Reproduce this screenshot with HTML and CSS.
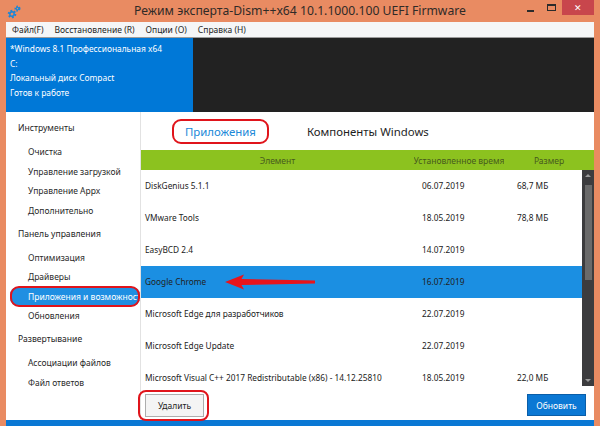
FILE: index.html
```html
<!DOCTYPE html>
<html lang="ru">
<head>
<meta charset="utf-8">
<title>Dism++</title>
<link rel="stylesheet" href="styles.css">
</head>
<body>
<div class="window">
  <header class="titlebar">
    <svg class="app-icon" width="14" height="14" viewBox="0 0 14 14">
      <circle cx="5" cy="9" r="3" fill="none" stroke="#1c86d6" stroke-width="2.6" stroke-dasharray="1.6 1.5"/>
      <circle cx="5" cy="9" r="2.2" fill="none" stroke="#1c86d6" stroke-width="1.4"/>
      <circle cx="10.5" cy="3.6" r="2" fill="none" stroke="#1c86d6" stroke-width="2" stroke-dasharray="1.3 1.2"/>
      <circle cx="10.5" cy="3.6" r="1.4" fill="none" stroke="#1c86d6" stroke-width="1.1"/>
    </svg>
    <div class="title">Режим эксперта-Dism++x64 10.1.1000.100 UEFI Firmware</div>
    <div class="controls">
      <span class="ctl-min"></span>
      <span class="ctl-max"></span>
      <span class="ctl-close">✕</span>
    </div>
  </header>
  <div class="frame">
    <nav class="menubar">
      <span>Файл(F)</span>
      <span>Восстановление (R)</span>
      <span>Опции (O)</span>
      <span>Справка (H)</span>
    </nav>
    <section class="info">
      <div class="info-text">
        <div>*Windows 8.1 Профессиональная x64</div>
        <div>C:</div>
        <div>Локальный диск Compact</div>
        <div>Готов к работе</div>
      </div>
      <div class="info-dark"></div>
    </section>
    <div class="main">
      <aside class="sidebar">
        <div class="nav-section">
          <div class="nav-head">Инструменты</div>
          <div class="nav-item">Очистка</div>
          <div class="nav-item">Управление загрузкой</div>
          <div class="nav-item">Управление Appx</div>
          <div class="nav-item">Дополнительно</div>
        </div>
        <div class="nav-section">
          <div class="nav-head">Панель управления</div>
          <div class="nav-item">Оптимизация</div>
          <div class="nav-item">Драйверы</div>
          <div class="nav-item selected">Приложения и возможности</div>
          <div class="nav-item">Обновления</div>
        </div>
        <div class="nav-section">
          <div class="nav-head">Развертывание</div>
          <div class="nav-item">Ассоциации файлов</div>
          <div class="nav-item">Файл ответов</div>
        </div>
      </aside>
      <main class="content">
        <div class="tabs">
          <span class="tab active">Приложения</span>
          <span class="tab">Компоненты Windows</span>
        </div>
        <div class="table-head">
          <div class="th">Элемент</div>
          <div class="th">Установленное время</div>
          <div class="th">Размер</div>
        </div>
        <div class="list">
          <div class="rows">
            <div class="row"><span class="name">DiskGenius 5.1.1</span><span>06.07.2019</span><span>68,7 МБ</span></div>
            <div class="row"><span class="name">VMware Tools</span><span>18.05.2019</span><span>78,8 МБ</span></div>
            <div class="row"><span class="name">EasyBCD 2.4</span><span>14.07.2019</span><span></span></div>
            <div class="row selected"><span class="name">Google Chrome</span><span>16.07.2019</span><span></span></div>
            <div class="row"><span class="name">Microsoft Edge для разработчиков</span><span>22.07.2019</span><span></span></div>
            <div class="row"><span class="name">Microsoft Edge Update</span><span>22.07.2019</span><span></span></div>
            <div class="row"><span class="name">Microsoft Visual C++ 2017 Redistributable (x86) - 14.12.25810</span><span>18.05.2019</span><span>22,0 МБ</span></div>
          </div>
          <div class="scrollbar">
            <svg class="sb-up" width="12" height="8" viewBox="0 0 12 8"><polygon points="3,6 9,6 6,3" fill="#9a9a9a"/></svg>
            <div class="sb-thumb"></div>
            <svg class="sb-down" width="12" height="8" viewBox="0 0 12 8"><polygon points="3,2 9,2 6,5" fill="#9a9a9a"/></svg>
          </div>
          <svg class="arrow" width="92" height="18" viewBox="0 0 92 18">
            <polygon points="0,9 19,1.5 16.5,6 90,7.6 90,10.6 16.5,12 19,16.5" fill="#e8141c"/>
          </svg>
        </div>
        <div class="footer">
          <button class="btn btn-delete">Удалить</button>
          <button class="btn btn-refresh">Обновить</button>
        </div>
      </main>
    </div>
    <div class="statusbar"></div>
  </div>
</div>
</body>
</html>
```
FILE: styles.css
```css
* { box-sizing: border-box; }
html, body { margin: 0; padding: 0; }
body {
  width: 600px;
  height: 426px;
  overflow: hidden;
  background: #e98b62;
  font-family: "Noto Sans", sans-serif;
  color: #222;
}
.window { width: 600px; height: 426px; display: flex; flex-direction: column; }

.titlebar {
  height: 22px;
  display: grid;
  grid-template-columns: 1fr auto 1fr;
  align-items: start;
}
.app-icon { margin: 5px 0 0 7px; }
.title { font-size: 12.2px; line-height: 22px; color: #2f2a27; white-space: nowrap; }
.controls { justify-self: end; display: flex; align-items: flex-start; margin-right: 6px; }
.ctl-min { width: 7px; height: 2px; background: #2b2b2b; margin-top: 10px; margin-right: 13px; }
.ctl-max { width: 9px; height: 7px; border: 1px solid #2b2b2b; border-top-width: 2px; margin-top: 4px; margin-right: 6px; }
.ctl-close {
  width: 32px; height: 15px; background: #c8464c; color: #fff;
  font-size: 9px; line-height: 15px; text-align: center;
}

.frame { margin: 0 6px; height: 404px; background: #fff; display: flex; flex-direction: column; }

.menubar {
  height: 16px;
  background: #f5f6f7;
  border-bottom: 1px solid #9c9c9c;
  display: flex;
  gap: 11px;
  padding-left: 6px;
  font-size: 8.5px;
  line-height: 15px;
  color: #1e1e1e;
}

.info { height: 74px; display: flex; }
.info-text {
  width: 187px;
  background: #0078d7;
  color: #fff;
  font-size: 8.4px;
  line-height: 14.5px;
  padding: 4px 0 0 4px;
}
.info-dark { flex: 1; background: #222; }

.main { height: 308px; display: flex; }

.sidebar { width: 134px; overflow: hidden; padding-top: 4px; }
.nav-section + .nav-section { margin-top: 1.5px; }
.nav-head { height: 24px; line-height: 24px; margin-bottom: 2px; padding-left: 12px; font-size: 8.6px; color: #1e1e1e; white-space: nowrap; }
.nav-item { height: 19.5px; line-height: 19.5px; padding-left: 22px; font-size: 8.5px; color: #2a2a2a; white-space: nowrap; }
.nav-item.selected {
  position: relative;
  margin-left: 4px;
  padding-left: 18px;
  background: #1f8fe2;
  color: #fff;
  border-radius: 8px;
}
.nav-item.selected::after {
  content: "";
  position: absolute;
  inset: -1px 0 -1px 0;
  border: 2px solid #e0141b;
  border-radius: 9px;
}

.content { flex: 1; display: flex; flex-direction: column; border-left: 1px solid #e2e2e2; }

.tabs { height: 38px; display: flex; align-items: center; padding-left: 31px; gap: 38px; }
.tab { font-size: 11.4px; color: #1e1e1e; white-space: nowrap; }
.tab.active {
  color: #2089d8;
  border: 2px solid #e0141b;
  border-radius: 9px;
  height: 25px;
  line-height: 21px;
  padding: 0 11px;
}

.table-head {
  height: 20px;
  background: #8cc21f;
  display: grid;
  grid-template-columns: 273px 90px 1fr;
  font-size: 8.5px;
  color: #475a1e;
}
.th { display: flex; justify-content: center; align-items: center; overflow: hidden; white-space: nowrap; }

.list { position: relative; height: 216px; display: flex; overflow: hidden; }
.rows { flex: 1; }
.row {
  height: 32px;
  display: grid;
  grid-template-columns: 281px 95px 1fr;
  align-items: center;
  padding-bottom: 2px;
  font-size: 8.3px;
  color: #222;
  white-space: nowrap;
}
.row .name { padding-left: 4px; }
.row.selected { background: #1b8fe2; }

.scrollbar { width: 12px; background: #3c3c3e; position: relative; }
.sb-up { position: absolute; top: 1px; left: 0; }
.sb-thumb { position: absolute; top: 15px; left: 3px; width: 7px; height: 95px; background: #6a6a6a; }
.sb-down { position: absolute; top: 207px; left: 0; }

.arrow { position: absolute; left: 84px; top: 103px; }

.footer {
  height: 34px;
  display: flex;
  justify-content: space-between;
  align-items: flex-start;
  padding: 8px 8px 0 4px;
}
.btn { font-family: "Noto Sans", sans-serif; font-size: 8.5px; width: 59px; padding: 0; }
.btn-delete {
  position: relative;
  height: 23px;
  background: #f4f4f4;
  border: 1px solid #adadad;
  color: #1e1e1e;
}
.btn-delete::after {
  content: "";
  position: absolute;
  top: -5px; bottom: -5px; left: -8px; right: -6px;
  border: 2px solid #e0141b;
  border-radius: 8px;
}
.btn-refresh {
  height: 22px;
  background: #0b78d4;
  border: 1px solid #0a5ea8;
  color: #fff;
}

.statusbar { height: 6px; background: #0a78d4; }
```
